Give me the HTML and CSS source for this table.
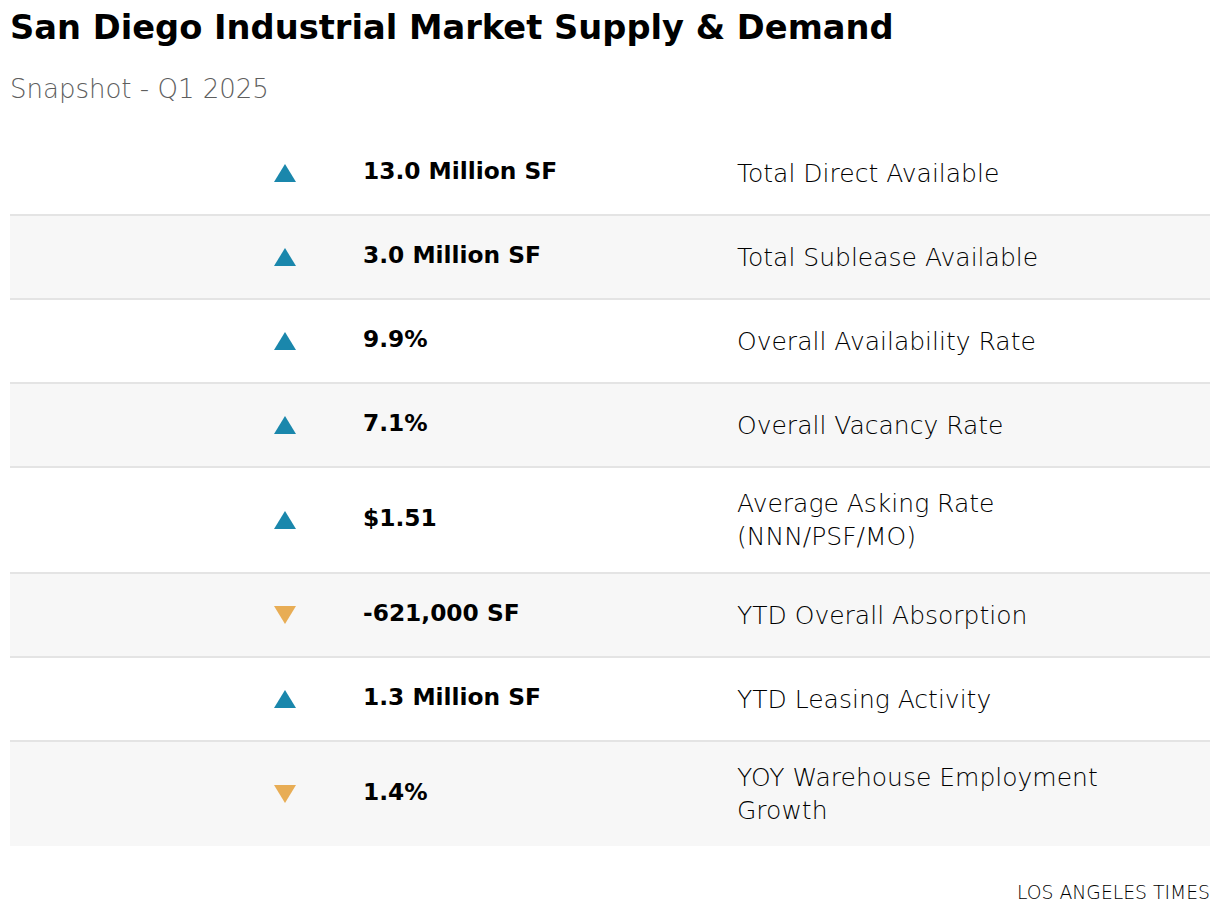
FILE: index.html
```html
<!DOCTYPE html>
<html lang="en">
<head>
<meta charset="utf-8">
<title>San Diego Industrial Market Supply &amp; Demand</title>
<link rel="stylesheet" href="styles.css">
</head>
<body>
<div class="page">
  <header class="head">
    <h1 class="title">San Diego Industrial Market Supply &amp; Demand</h1>
    <p class="subtitle">Snapshot - Q1 2025</p>
  </header>
  <div class="table">
    <div class="row">
      <div class="icon"><span class="tri up"></span></div>
      <div class="value">13.0 Million SF</div>
      <div class="label">Total Direct Available</div>
    </div>
    <div class="row alt">
      <div class="icon"><span class="tri up"></span></div>
      <div class="value">3.0 Million SF</div>
      <div class="label">Total Sublease Available</div>
    </div>
    <div class="row">
      <div class="icon"><span class="tri up"></span></div>
      <div class="value">9.9%</div>
      <div class="label">Overall Availability Rate</div>
    </div>
    <div class="row alt">
      <div class="icon"><span class="tri up"></span></div>
      <div class="value">7.1%</div>
      <div class="label">Overall Vacancy Rate</div>
    </div>
    <div class="row">
      <div class="icon"><span class="tri up"></span></div>
      <div class="value">$1.51</div>
      <div class="label">Average Asking Rate<br>(NNN/PSF/MO)</div>
    </div>
    <div class="row alt">
      <div class="icon"><span class="tri down"></span></div>
      <div class="value">-621,000 SF</div>
      <div class="label">YTD Overall Absorption</div>
    </div>
    <div class="row">
      <div class="icon"><span class="tri up"></span></div>
      <div class="value">1.3 Million SF</div>
      <div class="label">YTD Leasing Activity</div>
    </div>
    <div class="row alt last">
      <div class="icon"><span class="tri down"></span></div>
      <div class="value">1.4%</div>
      <div class="label">YOY Warehouse Employment<br>Growth</div>
    </div>
  </div>
  <footer class="credit">LOS ANGELES TIMES</footer>
</div>
</body>
</html>
```
FILE: styles.css
```css
* { box-sizing: border-box; }
html, body { margin: 0; padding: 0; background: #fff; }
body {
  font-family: "DejaVu Sans", "Open Sans", Arial, sans-serif;
  color: #111;
}
.page {
  width: 1220px;
  padding: 0 10px;
}
.head {
  padding-top: 6px;
}
.title {
  margin: 0;
  font-size: 33.7px;
  line-height: 44px;
  font-weight: 700;
  color: #000;
}
.subtitle {
  margin: 23px 0 0;
  font-size: 26px;
  line-height: 32px;
  font-weight: 200;
  color: #5e5e5e;
}
.table {
  margin-top: 27px;
}
.row {
  display: grid;
  grid-template-columns: 264px 89px 374px 1fr;
  grid-template-areas: ". icon value label";
  align-items: center;
  min-height: 84px;
  border-bottom: 2px solid #e4e4e4;
}
.row.alt { background: #f7f7f7; }
.row.last { border-bottom: none; }
.icon { grid-area: icon; display: flex; align-items: center; }
.value {
  grid-area: value;
  font-size: 23.3px;
  line-height: 32px;
  font-weight: 700;
  color: #000;
  padding-bottom: 5px;
}
.label {
  grid-area: label;
  font-size: 25px;
  line-height: 33px;
  font-weight: 200;
  color: #000;
  padding: 19px 0;
}
.tri {
  display: block;
  width: 0;
  height: 0;
  border-left: 11.5px solid transparent;
  border-right: 11.5px solid transparent;
}
.tri.up { border-bottom: 18px solid #1a87ac; }
.tri.down { border-top: 18px solid #e8ad55; }
.credit {
  text-align: right;
  font-size: 18.8px;
  line-height: 22px;
  font-weight: 200;
  color: #000;
  margin-top: 36px;
}
```
